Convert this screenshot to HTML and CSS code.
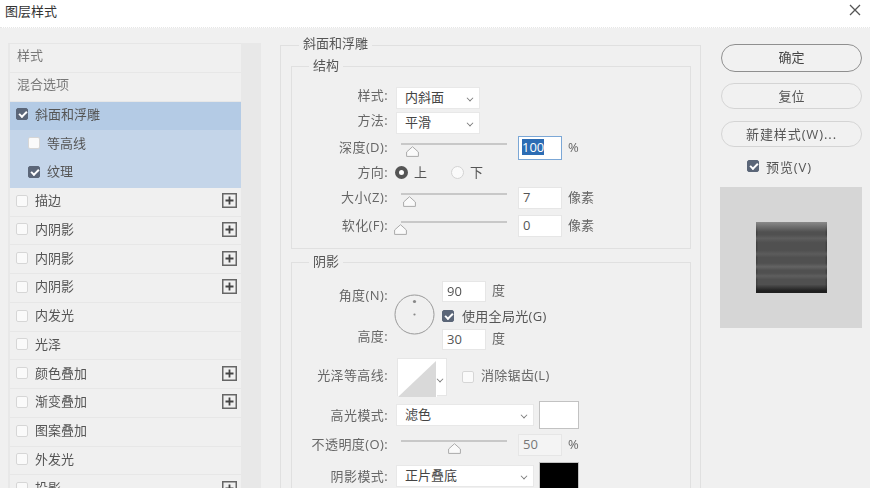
FILE: index.html
```html
<!DOCTYPE html>
<html lang="zh-CN">
<head>
	<meta charset="UTF-8"/>
	<meta name="viewport" content="width=device-width, initial-scale=1.0"/>
	<title>图层样式</title>
	<link rel="stylesheet" href="styles.css">
</head>
<body>
	<svg class="defs" width="0" height="0">
		<symbol id="plus" viewBox="0 0 15 15">
			<rect x="0.75" y="0.75" width="13.5" height="13.5" fill="none" stroke="#666" stroke-width="1.5"/>
			<path d="M7.5 3.5v8M3.5 7.5h8" stroke="#444" stroke-width="1.8"/>
		</symbol>
		<symbol id="thumb" viewBox="0 0 13 11">
			<path d="M6.5 .7 12.4 6v4.4H.6V6z" fill="#fafafa" stroke="#aaa"/>
		</symbol>
	</svg>

	<div class="dialog">
		<header class="title-bar">
			<h1>图层样式</h1>
			<svg class="close" width="12" height="12" viewBox="0 0 12 12"><path d="M1 1l10 10M11 1 1 11" stroke="#555" stroke-width="1.3"/></svg>
		</header>

		<div class="main">
			<div class="side">
				<ul class="style-list">
					<li class="item plain">样式</li>
					<li class="item plain">混合选项</li>
					<li class="item active"><span class="check on"></span>斜面和浮雕</li>
					<li class="item selected sub"><span class="check"></span>等高线</li>
					<li class="item selected sub"><span class="check on"></span>纹理</li>
					<li class="item"><span class="check"></span>描边<svg class="plus"><use href="#plus"/></svg></li>
					<li class="item"><span class="check"></span>内阴影<svg class="plus"><use href="#plus"/></svg></li>
					<li class="item"><span class="check"></span>内阴影<svg class="plus"><use href="#plus"/></svg></li>
					<li class="item"><span class="check"></span>内阴影<svg class="plus"><use href="#plus"/></svg></li>
					<li class="item"><span class="check"></span>内发光</li>
					<li class="item"><span class="check"></span>光泽</li>
					<li class="item"><span class="check"></span>颜色叠加<svg class="plus"><use href="#plus"/></svg></li>
					<li class="item"><span class="check"></span>渐变叠加<svg class="plus"><use href="#plus"/></svg></li>
					<li class="item"><span class="check"></span>图案叠加</li>
					<li class="item"><span class="check"></span>外发光</li>
					<li class="item"><span class="check"></span>投影<svg class="plus"><use href="#plus"/></svg></li>
				</ul>
				<div class="channel"></div>
			</div>

			<fieldset class="outer">
				<legend>斜面和浮雕</legend>

				<fieldset class="group structure">
					<legend>结构</legend>

					<div class="row row-select">
						<label>样式:</label>
						<div class="select narrow">内斜面<span class="chevron"></span></div>
					</div>
					<div class="row row-select">
						<label>方法:</label>
						<div class="select narrow">平滑<span class="chevron"></span></div>
					</div>
					<div class="row row-slider">
						<label>深度(D):</label>
						<div class="slider"><svg class="thumb" style="left:5px"><use href="#thumb"/></svg></div>
						<div class="field focus"><span class="picked">100</span></div>
						<span class="unit">%</span>
					</div>
					<div class="row row-select">
						<label>方向:</label>
						<span class="radio on"></span><span class="radio-text">上</span>
						<span class="radio"></span><span class="radio-text">下</span>
					</div>
					<div class="row row-slider">
						<label>大小(Z):</label>
						<div class="slider"><svg class="thumb" style="left:2px"><use href="#thumb"/></svg></div>
						<div class="field">7</div>
						<span class="unit">像素</span>
					</div>
					<div class="row row-slider spaced">
						<label>软化(F):</label>
						<div class="slider"><svg class="thumb" style="left:-7px"><use href="#thumb"/></svg></div>
						<div class="field">0</div>
						<span class="unit">像素</span>
					</div>
				</fieldset>

				<fieldset class="group shadow">
					<legend>阴影</legend>

					<div class="light">
						<label class="light-angle">角度(N):</label>
						<svg class="dial" width="41" height="41" viewBox="0 0 41 41">
							<circle cx="20.5" cy="20.5" r="19.5" fill="none" stroke="#999"/>
							<circle cx="20.5" cy="7.5" r="1.6" fill="#888"/>
							<circle cx="20.5" cy="20.5" r="1.1" fill="#888"/>
						</svg>
						<div class="field light-field">90<span class="unit-after">度</span></div>
						<div class="global"><span class="check on"></span>使用全局光(G)</div>
						<label class="light-height">高度:</label>
						<div class="field light-field">30<span class="unit-after">度</span></div>
					</div>

					<div class="row row-contour">
						<label>光泽等高线:</label>
						<div class="contour">
							<svg width="39" height="38" viewBox="0 0 39 38">
								<rect width="39" height="38" fill="#fff"/>
								<path d="M0 38 38 2V38z" fill="#d9d9d9"/>
							</svg>
							<span class="chevron"></span>
						</div>
						<span class="check"></span>
						<span class="contour-text">消除锯齿(L)</span>
					</div>
					<div class="row row-mode">
						<label>高光模式:</label>
						<div class="select wide">滤色<span class="chevron"></span></div>
						<div class="swatch white"></div>
					</div>
					<div class="row row-slider">
						<label>不透明度(O):</label>
						<div class="slider"><svg class="thumb" style="left:47px"><use href="#thumb"/></svg></div>
						<div class="field muted">50</div>
						<span class="unit">%</span>
					</div>
					<div class="row row-mode">
						<label>阴影模式:</label>
						<div class="select wide">正片叠底<span class="chevron"></span></div>
						<div class="swatch black"></div>
					</div>
				</fieldset>
			</fieldset>

			<aside class="actions">
				<button class="primary">确定</button>
				<button class="reset">复位</button>
				<button class="new-style">新建样式(W)...</button>
				<div class="preview-toggle"><span class="check on"></span>预览(V)</div>
				<div class="preview"><div class="sample"></div></div>
			</aside>
		</div>
	</div>
</body>
</html>
```

FILE: styles.css
```css
*{
	box-sizing: border-box;
	margin: 0;
	padding: 0;
}
html, body{
	height: 100%;
	overflow: hidden;
}
body{
	background: #f0f0f0;
	color: #555;
	font-family: "Open Sans", "Noto Sans CJK SC", sans-serif;
	font-size: 13px;
}
.defs{
	display: block;
	height: 0;
}
.dialog{
	height: 488px;
	overflow: hidden;
	filter: blur(.4px);
}
.title-bar{
	height: 28px;
	background: #fff;
	display: flex;
	align-items: center;
	justify-content: space-between;
	padding: 0 9px 7px 5px;
	border-bottom: 1px dotted #e6e6e6;
}
.title-bar h1{
	font-size: 13px;
	font-weight: 400;
	color: #333;
}
.main{
	display: grid;
	grid-template-columns: 253px 421px 142px;
	column-gap: 19px;
	padding-left: 8px;
	align-items: start;
}
.side{
	display: flex;
	margin-top: 15px;
	height: 461px;
	overflow: hidden;
}
.style-list{
	list-style: none;
	width: 233px;
	flex: none;
	border-top: 1px solid #e6e6e6;
	border-left: 2px solid #e8e8e8;
}
.channel{
	width: 20px;
	background: #e8e8e8;
}
.item{
	height: 28.75px;
	display: flex;
	align-items: center;
	padding: 0 4px 2px 6px;
	border-bottom: 1px solid #e7e7e7;
	white-space: nowrap;
	line-height: 17px;
}
.item .check{
	margin-right: 7px;
}
.item.plain{
	color: #777;
	padding-left: 7px;
	padding-bottom: 5px;
}
.item.active{
	background: #b4cbe5;
	border-bottom-color: #b4cbe5;
}
.item.selected{
	background: #c4d5e9;
	border-bottom-color: #c4d5e9;
}
.item.sub{
	padding-left: 18px;
}
.plus{
	width: 15px;
	height: 15px;
	margin-left: auto;
}
.check{
	display: inline-block;
	position: relative;
	flex: none;
	width: 12px;
	height: 12px;
	border: 1px solid #d6d6d6;
	border-radius: 2px;
	background: #fafafa;
}
.check.on{
	background: #5b6678;
	border-color: #5b6678;
}
.check.on::after{
	content: "";
	position: absolute;
	left: 2px;
	top: 2px;
	width: 6px;
	height: 3px;
	border-left: 2px solid #fff;
	border-bottom: 2px solid #fff;
	transform: rotate(-45deg);
}
fieldset{
	border: 1px solid #e0e0e0;
	min-width: 0;
}
.outer{
	height: 480px;
	margin-top: 7px;
	border-bottom: 0;
	padding: 0 9px 0 10px;
}
.outer > legend{
	margin-left: 8px;
	padding: 0 4px;
	height: 20px;
	line-height: 16px;
}
.group > legend{
	margin-left: 17px;
	padding: 0 4px;
	height: 20px;
	line-height: 18px;
}
.structure{
	margin-top: 1px;
	padding: 9px 0 10px;
}
.shadow{
	margin-top: 3px;
	padding-top: 9px;
	height: 260px;
	border-bottom: 0;
}
.row{
	display: flex;
	align-items: center;
	white-space: nowrap;
}
label{
	flex: none;
	width: 96px;
	margin-right: 8px;
	padding-bottom: 2px;
	text-align: right;
	color: #666;
	letter-spacing: .4px;
}
.row-select{
	height: 25px;
}
.row-select:first-of-type label,
.row-select:first-of-type + .row-select label{
	padding-bottom: 6px;
}
.row-slider{
	height: 25px;
}
.row-slider.spaced{
	margin-top: 3px;
}
.select{
	position: relative;
	height: 22px;
	line-height: 18px;
	background: #fff;
	border: 1px solid #e8e8e8;
	padding-left: 8px;
	color: #444;
}
.narrow{
	width: 84px;
}
.wide{
	width: 138px;
}
.chevron{
	position: absolute;
	right: 6px;
	top: 7px;
	width: 6px;
	height: 6px;
	border-right: 1px solid #777;
	border-bottom: 1px solid #777;
	transform: rotate(45deg) scale(.8);
}
.slider{
	position: relative;
	flex: none;
	width: 106px;
	height: 25px;
	margin: 0 11px 0 5px;
}
.slider::before{
	content: "";
	position: absolute;
	left: 0;
	right: 0;
	top: 8px;
	height: 2px;
	background: #c8c8c8;
}
.thumb{
	position: absolute;
	top: 11px;
	width: 13px;
	height: 11px;
}
.field{
	position: relative;
	flex: none;
	width: 44px;
	height: 22px;
	line-height: 19px;
	padding-left: 4px;
	background: #fff;
	border: 1px solid #e6e6e6;
	color: #555;
}
.field.focus{
	height: 24px;
	line-height: 21px;
	padding-left: 3px;
	border-color: #7ba7d6;
}
.field.muted{
	background: #f4f4f4;
	color: #777;
}
.picked{
	display: inline-block;
	line-height: 16px;
	background: #2c6cb4;
	color: #fff;
}
.unit{
	margin-left: 6px;
	padding-bottom: 2px;
	color: #666;
}
.unit-after{
	position: absolute;
	left: 49px;
	top: -1px;
	color: #666;
}
.radio{
	flex: none;
	width: 13px;
	height: 13px;
	border-radius: 50%;
	border: 1px solid #d2d2d2;
	background: #fafafa;
}
.radio.on{
	border: 4px solid #555;
	background: #fff;
	margin-left: -1px;
}
.radio + .radio-text{
	margin: 0 24px 0 6px;
	padding-bottom: 2px;
}
.light{
	display: grid;
	grid-template-columns: 96px 40px 1fr;
	grid-template-rows: 21px 27px 21px;
	column-gap: 8px;
}
.light label{
	margin: 0;
}
.light-angle{
	grid-column: 1;
	grid-row: 1;
	padding-top: 4px;
}
.light-height{
	grid-column: 1;
	grid-row: 3;
}
.light .light-height{
	margin-top: -3px;
}
.dial{
	grid-column: 2;
	grid-row: 1 / 4;
	align-self: center;
	margin: -2px 0 0 -2px;
}
.light-field{
	grid-column: 3;
	margin-left: -2px;
	height: 21px;
	padding-left: 4px;
	line-height: 18px;
}
.global{
	grid-column: 3;
	grid-row: 2;
	margin-left: -2px;
	display: flex;
	align-items: center;
	gap: 8px;
	white-space: nowrap;
	color: #555;
	letter-spacing: .3px;
}
.row-contour{
	height: 38px;
	margin-top: 8px;
}
.row-contour label{
	padding-bottom: 5px;
}
.contour{
	position: relative;
	display: flex;
	flex: none;
	width: 50px;
	height: 38px;
	margin: 0 15px 0 1px;
	background: #fff;
	border: 1px solid #e6e6e6;
}
.contour .chevron{
	right: 3px;
	top: 17px;
}
.contour-text{
	margin-left: 7px;
	padding-bottom: 5px;
	color: #666;
	letter-spacing: .3px;
}
.row-mode{
	height: 28px;
	margin-top: 5px;
}
.row-slider + .row-mode{
	margin-top: 6px;
}
.row-mode + .row-slider{
	margin-top: 4px;
	height: 23px;
}
.row-mode .select{
	margin-right: 5px;
}
.swatch{
	flex: none;
	width: 40px;
	height: 28px;
	border: 1px solid #c2c2c2;
}
.swatch.white{
	background: #fff;
}
.swatch.black{
	background: #000;
}
.actions{
	display: flex;
	flex-direction: column;
	margin-top: 16px;
}
button{
	font: inherit;
	color: #555;
	background: #f1f1f1;
	height: 26px;
	border: 1px solid #d4d4d4;
	border-radius: 14px;
	width: 141px;
	margin-left: 1px;
	line-height: 20px;
	padding-bottom: 1px;
}
.primary{
	height: 28px;
	padding-bottom: 3px;
	border-color: #8f8f8f;
	color: #444;
}
.reset{
	margin-top: 11px;
}
.new-style{
	margin-top: 12px;
	letter-spacing: .9px;
}
.preview-toggle{
	display: flex;
	align-items: center;
	gap: 7px;
	height: 20px;
	margin: 9px 0 1px 27px;
	letter-spacing: .9px;
}
.preview{
	height: 141px;
	margin-top: 10px;
	background: #d6d6d6;
	display: flex;
	align-items: center;
	justify-content: center;
}
.sample{
	width: 71px;
	height: 71px;
	margin-left: 1px;
	background:
		linear-gradient(#8a8a8a, transparent 14%, transparent 88%, #1f1f1f 97%),
		linear-gradient(transparent 18%, #5e5e5e 23%, transparent 29%, transparent 40%, #5c5c5c 45%, transparent 50%, transparent 58%, #636363 63%, transparent 68%, transparent 72%, #5e5e5e 76%, transparent 81%),
		linear-gradient(90deg, #3d3d3d, transparent 3%, transparent 97%, #3d3d3d),
		#505050;
}
```
